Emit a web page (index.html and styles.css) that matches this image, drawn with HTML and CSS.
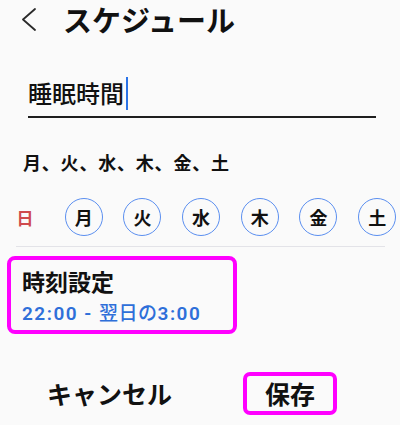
FILE: index.html
```html
<!DOCTYPE html>
<html lang="ja">
<head>
<meta charset="utf-8">
<title>スケジュール</title>
<link rel="stylesheet" href="styles.css">
</head>
<body>
<div class="page">
  <header class="header">
    <svg class="back" width="16" height="24" viewBox="0 0 16 24" aria-hidden="true">
      <polyline points="13,2 1,12.5 13,23" fill="none" stroke="#2a2a2a" stroke-width="1.8" stroke-linecap="round" stroke-linejoin="round"/>
    </svg>
    <h1 class="title">スケジュール</h1>
  </header>

  <div class="name-field"><span class="name-text">睡眠時間</span><span class="caret"></span></div>

  <div class="days-summary">月、火、水、木、金、土</div>

  <div class="day-row">
    <div class="day sun">日</div>
    <div class="day on">月</div>
    <div class="day on">火</div>
    <div class="day on">水</div>
    <div class="day on">木</div>
    <div class="day on">金</div>
    <div class="day on">土</div>
  </div>
  <div class="divider"></div>

  <div class="time-box">
    <div class="time-label">時刻設定</div>
    <div class="time-value">22:00 - <span class="jp">翌日の</span>3:00</div>
  </div>

  <div class="actions">
    <div class="btn cancel">キャンセル</div>
    <div class="btn save">保存</div>
  </div>
</div>
</body>
</html>
```

FILE: styles.css
```css
html, body {
  margin: 0;
  padding: 0;
  background: #fafafa;
}
body {
  font-family: "Noto Sans CJK JP", "Noto Sans", sans-serif;
  color: #111;
  width: 400px;
  height: 425px;
  overflow: hidden;
}
.page {
  display: flex;
  flex-direction: column;
}
.header {
  display: flex;
  align-items: center;
  height: 38px;
  padding-left: 22px;
}
.back {
  display: block;
}
.title {
  margin: 0 0 0 25px;
  font-size: 29px;
  line-height: 36px;
  font-weight: 700;
  color: #111;
  white-space: nowrap;
}
.name-field {
  margin: 38px 24px 0 28px;
  height: 34px;
  padding-bottom: 6px;
  border-bottom: 2px solid #1e1e1e;
  display: flex;
  align-items: center;
}
.name-text {
  font-size: 24px;
  line-height: 34px;
  font-weight: 500;
  color: #111;
}
.caret {
  width: 2px;
  height: 33px;
  margin-left: 2px;
  background: #2a73e8;
}
.days-summary {
  margin: 32px 0 0 23px;
  font-size: 18px;
  line-height: 24px;
  font-weight: 700;
  letter-spacing: 0.8px;
}
.day-row {
  margin-top: 24px;
  padding-left: 6px;
  display: grid;
  grid-template-columns: repeat(7, 38px);
  column-gap: 20.7px;
}
.day {
  width: 38px;
  height: 38px;
  box-sizing: border-box;
  display: flex;
  align-items: center;
  justify-content: center;
  font-size: 18px;
  font-weight: 700;
  color: #111;
}
.day.on {
  border: 1.5px solid #5b8ff0;
  border-radius: 50%;
}
.day.sun {
  color: #cf4a4d;
  font-size: 17px;
}
.divider {
  margin: 10px 15px 0 16px;
  height: 1px;
  background: #e3e3e8;
}
.time-box {
  margin: 9px 0 0 7px;
  width: 230px;
  box-sizing: border-box;
  border: 4px solid #ff00ff;
  border-radius: 8px;
  padding: 7px 0 4px 11px;
}
.time-label {
  font-size: 23px;
  line-height: 28px;
  font-weight: 700;
  color: #111;
}
.time-value {
  margin-top: 5px;
  font-family: "Roboto", "Noto Sans CJK JP", sans-serif;
  font-size: 19px;
  line-height: 24px;
  font-weight: 600;
  letter-spacing: 1.5px;
  color: #2e6fd9;
}
.time-value .jp {
  font-family: "Noto Sans CJK JP", sans-serif;
  font-weight: 500;
  letter-spacing: 0.5px;
}
.actions {
  margin-top: 38px;
  display: flex;
  align-items: center;
}
.btn {
  font-size: 25px;
  font-weight: 700;
  color: #111;
  height: 43px;
  line-height: 43px;
  box-sizing: border-box;
}
.cancel {
  margin-left: 47px;
}
.save {
  margin-left: 71px;
  width: 94px;
  border: 4px solid #ff00ff;
  border-radius: 7px;
  line-height: 35px;
  text-align: center;
}
```
